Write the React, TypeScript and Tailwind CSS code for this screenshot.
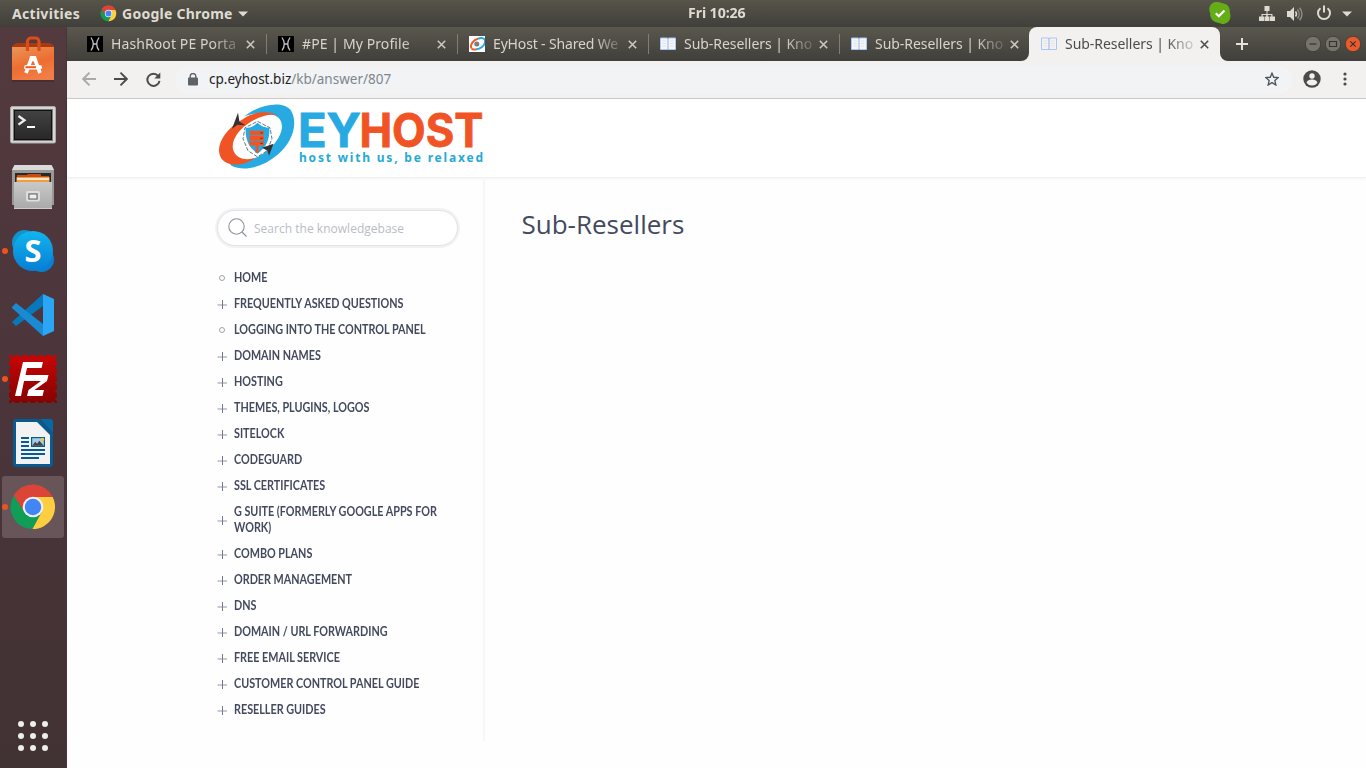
import React from "react";

const ui = "font-['Noto_Sans','Open_Sans',sans-serif]";

function ChromeLogo({ size }: { size: number }) {
  return (
    <svg width={size} height={size} viewBox="0 0 48 48">
      <path d="M24 24 4.9 12A22 22 0 0 1 43.6 14H24Z" fill="#db4437" />
      <path d="M4.9 12.5A22 22 0 0 0 23.5 46L32.7 29 15.3 29Z" fill="#0f9d58" />
      <path d="M43.6 14H24L32.7 29 23.5 46A22 22 0 0 0 43.6 14Z" fill="#ffcd40" />
      <path d="M4.9 12.5 15.3 29 24 14H43.6A22 22 0 0 0 4.9 12.5Z" fill="#db4437" />
      <circle cx="24" cy="24" r="10.3" fill="#f1f1f1" />
      <circle cx="24" cy="24" r="8.2" fill="#4285f4" />
    </svg>
  );
}

function TopBar() {
  return (
    <div className={`flex h-[27px] shrink-0 items-center bg-linear-to-b from-[#57544a] to-[#403f3a] text-[14px] leading-none font-bold text-[#dfdbd2] ${ui}`}>
      <div className="flex w-[688px] items-center">
        <span className="ml-3 w-[88px] tracking-[0.3px] whitespace-nowrap">Activities</span>
        <ChromeLogo size={17} />
        <span className="ml-[5px] w-[111px] tracking-[0.25px] whitespace-nowrap">Google Chrome</span>
        <svg className="ml-[5px]" width="10" height="6"><path d="M0 .5h10L5 5.5Z" fill="#dfdbd2" /></svg>
      </div>
      <span className="text-[13.5px] tracking-[-0.1px] whitespace-nowrap"><span className="inline-block origin-left scale-x-[1.05]">Fri 10:26</span></span>
      <div className="ml-auto flex items-center pr-[14px]">
        <svg className="-mt-px" width="22" height="22" viewBox="0 0 22 22">
          <path d="M6 0C10-.5 12 1 14 1.2c5 .8 7.400 5 6.800 9.600 2 4.500-.5 10.700-6 11.200-3 .2-4-1-6-1.200C3.500 20 .8 16 1.200 11.200-.8 7 .5 1.500 6 0Z" fill="#64ad16" />
          <path d="m6.800 11.300 3 3 5.600-5.800" fill="none" stroke="#fff" strokeWidth="2.200" />
        </svg>
        <svg className="ml-7" width="16" height="16" viewBox="0 0 16 16" fill="#dfdbd2">
          <path d="M5.500 0h5v5h-2v3h5v2.500H16V15h-5v-4.500h1.300V9H8.800v1.500h1.700V15h-5v-4.500h1.700V9H3.700v1.500H5V15H0v-4.500h2.500V8h5V5h-2Z" />
        </svg>
        <svg className="ml-[12px]" width="16" height="16" viewBox="0 0 16 16">
          <path d="M0 5h3l4-4v14l-4-4H0Z" fill="#dfdbd2" />
          <path d="M8.500 5.500a4 4 0 0 1 0 5" fill="none" stroke="#dfdbd2" strokeWidth="1.500" />
          <path d="M10.500 3.500a7 7 0 0 1 0 9M12.500 1.800a9 9 0 0 1 0 12.400" fill="none" stroke="#96948c" strokeWidth="1.300" />
        </svg>
        <svg className="-mt-px ml-[13px]" width="16" height="16" viewBox="0 0 16 16" fill="none" stroke="#dfdbd2" strokeWidth="2">
          <path d="M4.500 3.200a6 6 0 1 0 7 0M8 .5v7" />
        </svg>
        <svg className="ml-[10px]" width="10" height="6"><path d="M0 .5h10L5 5.500Z" fill="#dfdbd2" /></svg>
      </div>
    </div>
  );
}

const SoftwareIcon = () => (
  <svg width="44" height="46" viewBox="0 0 44 46">
    <defs><linearGradient id="bag" x1="0" y1="0" x2=".4" y2="1"><stop stopColor="#e8955a" /><stop offset=".6" stopColor="#ee6d30" /><stop offset="1" stopColor="#f07d45" /></linearGradient></defs>
    <path d="M1 10 5 7h34l4 3v5H1Z" fill="#a83910" />
    <path d="M1 11h42v33H1Z" fill="url(#bag)" />
    <path d="M1 45h42" stroke="#3b2529" strokeWidth="1" />
    <path d="M16.500 15V5.500a3.500 3.500 0 0 1 3.500-3.500h4.500A3.500 3.500 0 0 1 28 5.500V15" fill="none" stroke="#dc4c18" strokeWidth="3.200" />
    <path d="m15 37 5-13.500h4L29 37" fill="none" stroke="#fff" strokeWidth="3.600" strokeLinejoin="bevel" />
    <path d="M19 20h6l1 4h-8Z" fill="#fff" />
    <rect x="13" y="29" width="18" height="4.500" rx="2.200" fill="#fff" />
    <path d="M14.500 31.200H25" stroke="#f05a20" strokeWidth="2" />
  </svg>
);
const TerminalIcon = () => (
  <svg className="mt-1" width="46" height="38" viewBox="0 0 46 38">
    <defs><linearGradient id="term" x1="0" y1="0" x2="0" y2="1"><stop stopColor="#424242" /><stop offset="1" stopColor="#282828" /></linearGradient></defs>
    <rect x=".5" y=".5" width="45" height="36.500" rx="1.500" fill="#d6d6d6" stroke="#aaa" />
    <rect x="3.500" y="3.500" width="39" height="31" fill="#111" stroke="#7b7b7b" />
    <path d="M5 5h36v28H5Z" fill="url(#term)" />
    <path d="m8.500 10 6 4.200-6 4.500" fill="none" stroke="#eee" strokeWidth="2.300" />
    <path d="M17 21h8" stroke="#fff" strokeWidth="2" />
  </svg>
);
const FilesIcon = () => (
  <svg width="42" height="44" viewBox="0 0 42 44">
    <defs><linearGradient id="cab" x1="0" y1="0" x2="0" y2="1"><stop stopColor="#c9c9c9" /><stop offset="1" stopColor="#aaa" /></linearGradient></defs>
    <path d="M2.500 0h37L42 5v35H0V5Z" fill="#999" />
    <path d="M2.500 0h37L42 5H0Z" fill="#dadada" />
    <path d="M3 8h36v12H3Z" fill="#292929" />
    <path d="M5 10h10l1-1h13v2h8v8H5Z" fill="#c54d18" />
    <path d="M4.500 12h33v5h-33Z" fill="#f49b3e" /><path d="M5 14h32" stroke="#fff" strokeWidth="1.500" />
    <path d="M2 17h38v26H2Z" fill="url(#cab)" /><path d="M2 43.500h38" stroke="#ccc" />
    <rect x="15" y="27" width="12" height="8.500" rx="1" fill="none" stroke="#dedede" strokeWidth="2" />
    <rect x="17" y="29" width="8" height="5" fill="#eee" stroke="#666" />
  </svg>
);
const SkypeIcon = () => (
  <svg width="42" height="42" viewBox="0 0 42 42">
    <defs><linearGradient id="sky" x1="0" y1="0" x2="0" y2="1"><stop stopColor="#10b5ef" /><stop offset="1" stopColor="#087ed4" /></linearGradient></defs>
    <circle cx="12.500" cy="12.500" r="12.500" fill="#1093ce" /><circle cx="29.500" cy="29.500" r="12.500" fill="#0880d4" />
    <circle cx="21" cy="21" r="20" fill="url(#sky)" />
    <text x="21" y="32" textAnchor="middle" className="font-['Open_Sans',sans-serif] font-bold" fontSize="31" fill="#fff" textLength="17" lengthAdjust="spacingAndGlyphs">S</text>
  </svg>
);
const CodeIcon = () => (
  <svg width="42" height="42" viewBox="0 0 42 42">
    <path d="M0 28 31 0v12L4 32Z" fill="#0878ba" />
    <path d="m0 13 4-4 27 21v12L0 14Z" fill="#1a8ad2" />
    <path d="m31 0 11 5v32l-11 5Z" fill="#2ba6f4" />
  </svg>
);
const FileZillaIcon = () => (
  <svg width="48" height="48" viewBox="0 0 48 48">
    <defs><linearGradient id="fz" x1="0" y1="0" x2="0" y2="1"><stop stopColor="#c90505" /><stop offset="1" stopColor="#850202" /></linearGradient></defs>
    <path d="M0 0h48v48H0Z" fill="url(#fz)" />
    <path d="M0 0h48v48H0Z" fill="none" stroke="#4b353a" strokeWidth="3.500" strokeLinecap="round" strokeDasharray="0 8" strokeDashoffset="-4" />
    <path d="M14 7h20l-1.500 6H18l-1.500 7H28l-2 6H15l-3 15H6Z" fill="#fff" />
    <path d="M25 20h14.500l-1.500 6-12.500 9h9.500l-1.500 6H18l1.500-6L32 26h-8Z" fill="#fff" />
  </svg>
);
const WriterIcon = () => (
  <svg width="40" height="48" viewBox="0 0 40 48">
    <path d="M2 0h24l14 14v32l-2 2H2l-2-2V2Z" fill="#075b91" />
    <path d="M3 3h21l13 13v29H3Z" fill="#f2f2f2" />
    <path d="M27 0h11l2 2v12Z" fill="#0669a3" />
    <path d="M8 19h8M8 23h8M8 27h8M8 31h24M8 35h24M8 39h18" stroke="#075b91" strokeWidth="1.900" />
    <path d="M18 18h14v10H18Z" fill="#075b91" /><path d="M19.200 19.200h11.600v7.600H19.200Z" fill="#a3cde8" />
    <path d="m19.200 26.800 3-4 2 2 2-3 4.600 5Z" fill="#444" /><circle cx="29.500" cy="20.500" r="1.700" fill="#f4ca3c" />
  </svg>
);

function Dock() {
  const apps = [
    { icon: <SoftwareIcon />, on: false }, { icon: <TerminalIcon />, on: false },
    { icon: <FilesIcon />, on: false }, { icon: <SkypeIcon />, on: true },
    { icon: <CodeIcon />, on: false }, { icon: <FileZillaIcon />, on: true },
    { icon: <WriterIcon />, on: false }, { icon: <ChromeLogo size={48} />, on: true },
  ];
  return (
    <nav className="flex w-[67px] shrink-0 flex-col gap-[2px] border-r border-[#49343a] bg-linear-to-b from-[#533a3e] via-[#4b353b] to-[#413233] pt-px pl-[2px]">
      {apps.map((a, i) => (
        <div key={i} className={`relative flex h-[62px] w-[62px] items-center justify-center rounded-[3px] ${i === 7 ? "bg-[#675559]" : ""}`}>
          {a.icon}
          {a.on && <span className="absolute top-[28px] left-0 size-[6px] rounded-full bg-[#e95420]" />}
        </div>
      ))}
      <div className="mt-auto mb-[17px] ml-[16px] grid w-[30px] grid-cols-3 gap-[6px]">
        {Array.from({ length: 9 }, (_, i) => <span key={i} className="size-[6px] rounded-full bg-[#eeeeec]" />)}
      </div>
    </nav>
  );
}

const HashIcon = () => (
  <svg width="16" height="16" viewBox="0 0 16 16"><path d="M0 0h16v16H0Z" fill="#000" /><path d="M4 1.500c2.800 4 2.800 9 0 13M12 1.500c-2.800 4-2.800 9 0 13M6 8h4" fill="none" stroke="#c5c5c5" strokeWidth="1.300" /></svg>
);
const EyIcon = () => (
  <svg width="16" height="16" viewBox="0 0 16 16"><path d="M0 0h16v16H0Z" fill="#fff" />
    <g transform="rotate(-38 8 8)" fill="none" strokeWidth="2"><path d="M1 8a7 4.600 0 0 1 11-3.500" stroke="#f15a29" /><path d="M12 4.500A7 4.600 0 1 1 4 11.500" stroke="#28a6df" /><path d="M1 8a7 4.600 0 0 0 3 3.700" stroke="#f15a29" /></g>
    <circle cx="7.800" cy="8" r="2.500" fill="#2e91bb" /><path d="M6.700 6.500h2.200v3H6.700Z" fill="#f15a29" />
  </svg>
);
const BookIcon = ({ pale }: { pale?: boolean }) => (
  <svg width="16" height="14" viewBox="0 0 16 14"><path d="M.5 1h7l.5.7.500-.7h7v11.500h-7L8 13l-.5-.5h-7Z" fill={pale ? "#f3f2f1" : "#f5f5f5"} stroke="#a9c7f5" /><path d="M8 1v12" stroke="#8eb3ef" /><path d="M2.500 4H6M2.500 6.500H6M2.500 9H6M10 4h3.500M10 6.500h3.500M10 9h3.500" stroke="#d8dfe9" strokeWidth=".8" /></svg>
);
const Close = () => <svg width="9" height="9" viewBox="0 0 9 9" stroke="currentColor" strokeWidth="1.600"><path d="m.8.8 7.400 7.400M8.200.8.8 8.200" /></svg>;

function TabStrip() {
  const tabs = [
    { t: "HashRoot PE Porta", icon: <HashIcon />, track: "tracking-[0.1px]" },
    { t: "#PE | My Profile", icon: <HashIcon />, track: "tracking-[0.1px]" },
    { t: "EyHost - Shared We", icon: <EyIcon />, track: "tracking-[-0.15px]" },
    { t: "Sub-Resellers | Kno", icon: <BookIcon />, track: "tracking-[-0.05px]" },
    { t: "Sub-Resellers | Kno", icon: <BookIcon />, track: "tracking-[-0.05px]" },
  ];
  return (
    <div className={`flex h-[34px] shrink-0 items-center bg-linear-to-b from-[#5a574e] to-[#403f3a] pl-[8px] text-[14px] ${ui}`}>
      {tabs.map((tab, i) => (
        <div key={i} className={`flex shrink-0 items-center pl-[12px] text-[#d8d4cb] ${i === 4 ? "w-[190px]" : "w-[192px] -mr-px"}`}>
          <span className="flex w-6 shrink-0">{tab.icon}</span>
          <span className={`-mt-px w-[129px] shrink-0 overflow-hidden mask-r-from-78% mask-r-to-105% whitespace-nowrap ${tab.track}`}>{tab.t}</span>
          <span className="ml-[6px] text-[#cbc8bf]"><Close /></span>
          {i < 4 && <span className="ml-auto h-[20px] w-px bg-[#817e76]" />}
        </div>
      ))}
      <div className="relative flex h-[34px] w-[191px] shrink-0 items-center rounded-t-[8px] bg-[#f2f1f0] pl-[12px] text-[#4c4c4c]">
        <svg className="absolute bottom-0 -left-2" width="8" height="8"><path d="M8 0v8H0A8 8 0 0 0 8 0" fill="#f2f1f0" /></svg>
        <svg className="absolute -right-2 bottom-0" width="8" height="8"><path d="M0 0v8h8A8 8 0 0 1 0 0" fill="#f2f1f0" /></svg>
        <span className="flex w-6 shrink-0"><BookIcon pale /></span>
        <span className="-mt-px w-[129px] shrink-0 overflow-hidden mask-r-from-78% mask-r-to-105% tracking-[-0.05px] whitespace-nowrap">Sub-Resellers | Kno</span>
        <span className="ml-[6px]"><Close /></span>
      </div>
      <svg className="ml-4" width="12" height="12" stroke="#e5e2dc" strokeWidth="2"><path d="M6 0v12M0 6h12" /></svg>
      <div className="mr-[5px] ml-auto flex gap-[4px]">
        {["M4.500 8h7", "M4.500 5.500h7v5h-7Z", "m5.300 5.300 5.400 5.400m0-5.400-5.400 5.400"].map((d, i) => (
          <svg key={d} width="16" height="16" viewBox="0 0 16 16"><circle cx="8" cy="8" r="7.700" fill={i === 2 ? "#e95b2b" : "#77746b"} stroke="#34332f" strokeWidth=".7" /><path d={d} fill="none" stroke="#34332f" strokeWidth="1.200" /></svg>
        ))}
      </div>
    </div>
  );
}

function Toolbar() {
  return (
    <div className="flex h-[38px] shrink-0 items-center border-b border-[#cfcdcb] bg-[#f2f1f0] pl-[15px]">
      <svg className="-mt-px" width="14" height="14" viewBox="0 0 14 14" fill="none" stroke="#aaa9a8" strokeWidth="1.900"><path d="M14 7H1.500M7.500.7 1.200 7l6.300 6.300" /></svg>
      <svg className="-mt-px ml-[18px]" width="14" height="14" viewBox="0 0 14 14" fill="none" stroke="#4b4b4b" strokeWidth="1.900"><path d="M0 7h12.500M6.500.7 12.800 7l-6.300 6.300" /></svg>
      <svg className="-mt-px ml-[18px]" width="15" height="15" viewBox="0 0 15 15" fill="none" stroke="#4b4b4b" strokeWidth="2"><path d="M12.300 4A6.100 6.100 0 1 0 13.500 8.800" /><path d="M14.300.5v6H8.300Z" fill="#4b4b4b" stroke="none" /></svg>
      <div className={`ml-[14px] flex h-[28px] w-[1118px] items-center rounded-full bg-[#f1f3f5] pl-[13px] text-[14px] ${ui}`}>
        <svg className="-mt-px" width="10" height="13" viewBox="0 0 10 13"><rect y="4.500" width="10" height="8" rx="1" fill="#5f6368" /><path d="M2.200 5V3.300a2.800 2.800 0 0 1 5.600 0V5" fill="none" stroke="#5f6368" strokeWidth="1.400" /></svg>
        <span className="ml-[11px] text-[13.500px] whitespace-nowrap text-[#80868b]"><span className="text-[#202124]">cp.eyhost.biz</span>/kb/answer/807</span>
        <svg className="-mt-[2px] mr-[14px] ml-auto" width="14" height="14" viewBox="0 0 24 24" fill="none" stroke="#4f5357" strokeWidth="2.300"><path d="m12 2 3 7 7.600.7-5.700 5 1.700 7.500L12 18.200l-6.600 4 1.700-7.500-5.700-5L9 9Z" /></svg>
      </div>
      <svg className="-mt-px ml-[10px]" width="18" height="18" viewBox="0 0 18 18"><circle cx="9" cy="9" r="8.700" fill="#4b4b4b" /><circle cx="9" cy="6" r="2.700" fill="#f2f1f0" /><path d="M3.700 13c0-2.200 2.600-3.400 5.300-3.400s5.300 1.200 5.300 3.400A6.700 6.700 0 0 1 9 15.500 6.700 6.700 0 0 1 3.700 13Z" fill="#f2f1f0" /></svg>
      <svg className="-mt-px ml-[22px]" width="4" height="14" fill="#4b4b4b"><circle cx="2" cy="2" r="1.600" /><circle cx="2" cy="7" r="1.600" /><circle cx="2" cy="12" r="1.600" /></svg>
    </div>
  );
}

function Logo() {
  return (
    <svg width="268" height="68" viewBox="0 0 268 68">
      <g transform="translate(-.5 .8)">
        <path d="M26 12C41 0 64-5 73 5c8 12 3 32-13 45-15 13-34 17-46 11l-5-6c12 5 30 1 43-11C64 33 68 20 61 13c-7-6-22-6-35-1Z" fill="#27aae1" />
        <path d="M61 11C52 6 38 6 26 14 5 26-3 43 4 54c8 9 23 7 34-1-9 3-18 1-21-5-5-8 1-20 12-28 11-8 23-12 32-9Z" fill="#f15424" />
        <path d="M20.500 8 22 17l6 3.500-8-.5L14.500 24Z" fill="#333" />
        <path d="m40 16.500 12.500 6.500 2 11-5 12-9.500 6-9.500-6-5-12 2-11Z" fill="none" stroke="#657681" strokeWidth="1" strokeDasharray="4 1.500" />
        <path d="M40 18c4 4 8 5 12 5 0 13-3 19-12 26-9-7-12-13-12-26 4 0 8-1 12-5Z" fill="#27aae1" />
        <path d="M32 26h14.500v4.500H32Zm0 5.300h14.500v4.300H32Zm0 5.100h14.500v4.300H32ZM38 40h3v8h-3Z" fill="#f15424" />
        <path d="M43 28h2M43 33.500h2M43 38.500h2" stroke="#333" />
        <path d="m56 39-4.500 12-1.500-5-5.500-3Z" fill="#333" />
      </g>
      <text x="80" y="42.500" className="font-['Inter','Open_Sans',sans-serif] font-bold" fontSize="46" textLength="63" lengthAdjust="spacingAndGlyphs" fill="#27aae1" stroke="#27aae1" strokeWidth=".8">EY</text>
      <text x="141.500" y="42.500" className="font-['Inter','Open_Sans',sans-serif] font-bold" fontSize="46" textLength="124" lengthAdjust="spacingAndGlyphs" fill="#f15424" stroke="#f15424" strokeWidth=".8">HOST</text>
      <text x="81" y="57.500" className="font-['Noto_Sans',sans-serif] font-bold" fontSize="12" textLength="184" fill="#27a9d6">host with us, be relaxed</text>
    </svg>
  );
}

const topics = ["HOME", "FREQUENTLY ASKED QUESTIONS", "LOGGING INTO THE CONTROL PANEL", "DOMAIN NAMES", "HOSTING", "THEMES, PLUGINS, LOGOS", "SITELOCK", "CODEGUARD", "SSL CERTIFICATES", "G SUITE (FORMERLY GOOGLE APPS FOR WORK)", "COMBO PLANS", "ORDER MANAGEMENT", "DNS", "DOMAIN / URL FORWARDING", "FREE EMAIL SERVICE", "CUSTOMER CONTROL PANEL GUIDE", "RESELLER GUIDES"];

function KnowledgeBase() {
  return (
    <main className="flex min-h-0 flex-1 flex-col bg-[#fefefe] font-['Open_Sans',sans-serif]">
      <header className="h-[78px] shrink-0 bg-white pt-[5px] pl-[151px] shadow-[0_1px_3px_rgba(0,0,0,0.09)]"><Logo /></header>
      <div className="flex h-[564px] pl-[150px]">
        <aside className="w-[266px] pt-[33px]">
          <label className="flex h-[36px] w-[241px] items-center rounded-full border border-[#e2e2e6] bg-white pl-[10px] shadow-[0_0_0_2px_#f2f2f4]">
            <svg className="-mt-px" width="19" height="19" viewBox="0 0 19 19" fill="none" stroke="#8c91a0" strokeWidth="1.100"><circle cx="8.500" cy="8.500" r="7.700" /><path d="m14 14 4.500 4.500" /></svg>
            <input placeholder="Search the knowledgebase" className="mt-px ml-[7px] w-[180px] bg-transparent text-[12px] tracking-[0.02px] outline-none placeholder:text-[#b9bcc5]" />
          </label>
          <ul className="mt-[19px] w-[243px] font-['Lato',sans-serif] text-[12.5px] leading-[16px] font-bold text-[#434a5e]">
            {topics.map((topic, i) => (
              <li key={topic} className="flex items-center py-[5px]">
                <svg className="mr-[6.500px] shrink-0" width="10" height="10" viewBox="0 0 10 10" fill="none">
                  {i === 0 || i === 2 ? <circle cx="5" cy="5" r="2.500" stroke="#a0a4af" /> : <><path d="M.5 6h9.500" stroke="#9da1ad" strokeWidth="1.100" /><path d="M5.500 1v9" stroke="#737b8f" /></>}
                </svg>
                <span className={`shrink-0 origin-left scale-x-[0.863] ${i === 9 ? "w-[250px]" : "whitespace-nowrap"}`}>{topic}</span>
              </li>
            ))}
          </ul>
        </aside>
        <article className="flex-1 border-l-2 border-[#f7f7f8] pl-[36.500px]">
          <h1 className="mt-[29px] text-[26px] leading-[36px] font-normal text-[#434a5e]">Sub-Resellers</h1>
        </article>
      </div>
    </main>
  );
}

export default function App() {
  return (
    <div className="flex h-[768px] w-[1366px] flex-col overflow-hidden">
      <TopBar />
      <div className="flex min-h-0 flex-1">
        <Dock />
        <div className="flex min-w-0 flex-1 flex-col"><TabStrip /><Toolbar /><KnowledgeBase /></div>
      </div>
    </div>
  );
}
